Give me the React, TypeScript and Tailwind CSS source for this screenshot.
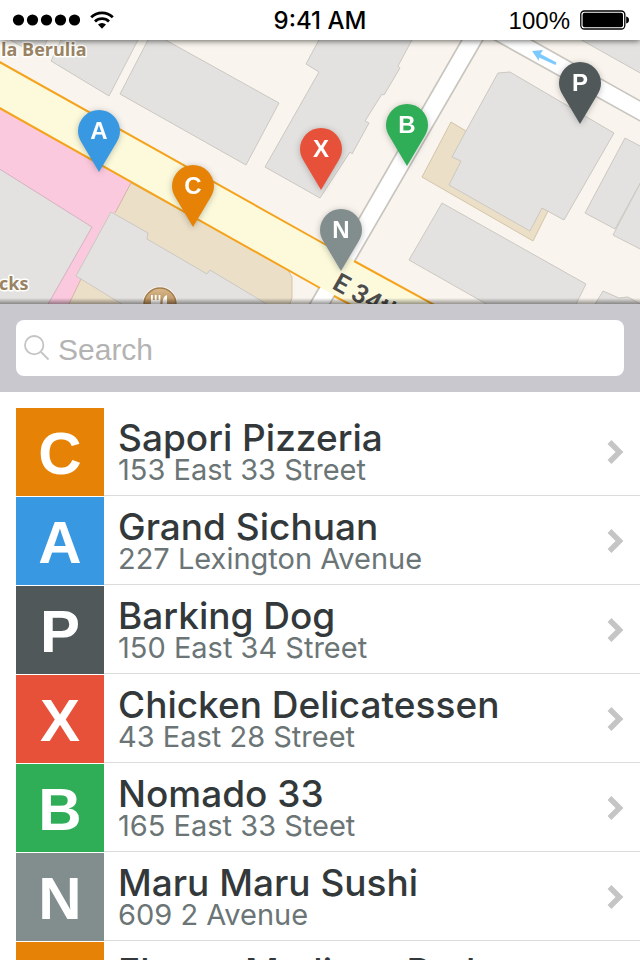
type Place = {
  letter: string;
  name: string;
  address: string;
  tile: string;
};

type Pin = {
  letter: string;
  x: number;
  y: number;
  fill: string;
};

const MAP_W = 640;
const MAP_H = 264;

const places: Place[] = [
  { letter: "C", name: "Sapori Pizzeria", address: "153 East 33 Street", tile: "bg-[#e68306]" },
  { letter: "A", name: "Grand Sichuan", address: "227 Lexington Avenue", tile: "bg-[#3898e2]" },
  { letter: "P", name: "Barking Dog", address: "150 East 34 Street", tile: "bg-[#505859]" },
  { letter: "X", name: "Chicken Delicatessen", address: "43 East 28 Street", tile: "bg-[#e85139]" },
  { letter: "B", name: "Nomado 33", address: "165 East 33 Steet", tile: "bg-[#2fae57]" },
  { letter: "N", name: "Maru Maru Sushi", address: "609 2 Avenue", tile: "bg-[#828d8e]" },
  { letter: "E", name: "Eleven Madison Park", address: "11 Madison Avenue", tile: "bg-[#e68306]" },
];

// x / y is the tip of the pin on the map
const pins: Pin[] = [
  { letter: "A", x: 99, y: 132, fill: "fill-[#3898e2]" },
  { letter: "C", x: 193, y: 187, fill: "fill-[#e68306]" },
  { letter: "X", x: 321, y: 150, fill: "fill-[#e85139]" },
  { letter: "B", x: 407, y: 126, fill: "fill-[#2fae57]" },
  { letter: "P", x: 580, y: 84, fill: "fill-[#505859]" },
  { letter: "N", x: 341, y: 231, fill: "fill-[#828d8e]" },
];

function StatusBar() {
  return (
    <header className="relative z-10 grid h-10 grid-cols-3 items-center bg-white px-3 text-2xl text-black shadow-[0_1px_6px_rgba(0,0,0,0.6)]">
      <div className="flex items-center gap-2">
        <svg width="68" height="12" viewBox="0 0 68 12" aria-label="Signal">
          {[6, 20, 34, 48, 62].map((cx) => (
            <circle key={cx} cx={cx + 0.5} cy="6" r="5.6" />
          ))}
        </svg>
        <svg width="28" height="20" viewBox="0 0 26 20" aria-label="Wi-Fi">
          <g fill="none" stroke="#000" strokeWidth="2.8">
            <path d="M2.2 7.2a15.4 15.4 0 0 1 21.6 0" />
            <path d="M6 11.4a10 10 0 0 1 14 0" />
          </g>
          <path d="M9 14.6a5.8 5.8 0 0 1 8 0l-4 4.2z" />
        </svg>
      </div>
      <div className="pt-0.5 text-center font-['Inter',sans-serif] font-medium">9:41 AM</div>
      <div className="-mr-px flex items-center justify-end gap-2.5">
        <span className="pt-0.5">100%</span>
        <svg width="49" height="20" viewBox="0 0 49 20" aria-label="Battery">
          <rect x="0.8" y="1" width="44" height="18" rx="3.5" fill="none" stroke="#000" strokeWidth="1.3" />
          <rect x="2.6" y="2.8" width="40.4" height="14.4" rx="2" />
          <path d="M46.2 6.5c2 .6 2.8 1.8 2.8 3.5s-.8 2.9-2.8 3.5z" />
        </svg>
      </div>
    </header>
  );
}

function StreetMap() {
  return (
    <svg
      className="h-full w-full"
      viewBox="0 40 640 264"
      preserveAspectRatio="xMidYMid slice"
      aria-hidden="true"
    >
      <rect x="0" y="40" width="640" height="264" fill="#f9f4ed" />

      {/* garden plots */}
      <g fill="#ebdfc8" stroke="#d3c5a8" strokeWidth="1">
        <path d="M131 183 287 269 292 277V298L289 306H60L76 276 111 212z" />
        <path d="M451 122 466 131 470 170 530 225 542 208 548 211 533 241 422 177 431 160z" />
      </g>

      {/* plaza */}
      <path d="M-2 107 131 183 115 213 111 212 76 276 81 279 68 306H40L-2 240z" fill="#fbc9de" />
      <path d="M131 183 115 213M81 279 68 306" stroke="#d6b2a8" strokeWidth="1" />

      {/* blocks */}
      <g fill="#e3e2e0" stroke="#cbc8c2" strokeWidth="1">
        <path d="M7 38 40 57 48 38z" />
        <path d="M62 38 51 61 109 96 139 38z" />
        <path d="M149 38 120 94 246 165 279 103 162 38z" />
        <path d="M320 38 306 64 319 72 265 167 320 198 350 152 352 154 369 123 365 121 382 94 384 95 400 68 398 66 413 38z" />
        <path d="M578 38 642 74V38z" />
        <path d="M466 131 498 73 510 72 614 133 564 220 542 208 530 231 449 185 461 161 452 157z" />
        <path d="M642 147 625 138 585 213 615 229 642 180z" />
        <path d="M642 180 613 235 642 250z" />
        <path d="M442 203 586 284 575 306H490L409 260z" />
        <path d="M594 306 603 291 619 298 628 297 644 306z" />
        <path d="M111 212 148 233 147 239 207 274 210 270 270 306H125L81 279 76 276z" />
        <path d="M-2 168 92 227 47 306H-2z" stroke="#d3b2c0" />
      </g>

      {/* side streets */}
      <g fill="#fff" stroke="#c8c5bf" strokeWidth="1.7">
        <path d="M463 38 308 307 328 307 484 38z" />
        <path d="M491 38 642 122V102L528 38z" />
      </g>

      {/* main avenue */}
      <path d="M-4 60 440 308H357L-4 106z" fill="#fcfadb" />
      <g stroke="#f5a31d" strokeWidth="2" fill="none">
        <path d="M-4 60 328 246M354 261 440 308" />
        <path d="M-4 106 320 288M334 296 357 308" />
      </g>

      <path
        d="M532 51 543 50 540.5 54 556.5 62.5 555.5 65 539 57.5 539 61z"
        fill="#7cc9fd"
      />

      {/* food marker */}
      <defs>
        <linearGradient id="food" x1="0" y1="0" x2="0" y2="1">
          <stop offset="0" stopColor="#d9b98c" />
          <stop offset="0.6" stopColor="#b08652" />
        </linearGradient>
      </defs>
      <circle cx="160" cy="304" r="17.5" fill="#fff" opacity="0.8" />
      <circle cx="160" cy="304" r="16" fill="url(#food)" stroke="#a57c4c" strokeWidth="1.5" />
      <path d="M151 295h1.8v5h2v-5h1.8v5h2v-5h1.8v9l-3 2v4h-3v-4l-3.4-2z" fill="#fff" />
      <path d="M167 295c-3 1-4.5 4-4.5 8v7h4.5z" fill="#fff" />

      <g
        fill="#9a8363"
        stroke="#fff"
        strokeWidth="3"
        strokeLinejoin="round"
        paintOrder="stroke"
        fontFamily="Open Sans, sans-serif"
        fontWeight="700"
        fontSize="18"
      >
        <text x="1" y="56">la Berulia</text>
        <text x="-1" y="290">cks</text>
      </g>
      <text
        transform="translate(331 288) rotate(29)"
        fill="#4c4c4a"
        stroke="#fdfbe6"
        strokeWidth="3"
        strokeLinejoin="round"
        paintOrder="stroke"
        fontFamily="Roboto, sans-serif"
        fontWeight="600"
        fontSize="26"
      >
        E 34th St
      </text>
    </svg>
  );
}

function MapPin({ pin }: { pin: Pin }) {
  return (
    <button
      type="button"
      aria-label={`Place ${pin.letter}`}
      className="absolute h-[62px] w-[42px] -translate-x-1/2 -translate-y-full drop-shadow-[0_1px_3px_rgba(0,0,0,0.25)]"
      style={{ left: `${(pin.x / MAP_W) * 100}%`, top: `${(pin.y / MAP_H) * 100}%` }}
    >
      <svg viewBox="0 0 42 62" className={`absolute inset-0 ${pin.fill}`} aria-hidden="true">
        <path d="M21 62 3.5 32.5C1.3 28.8 0 25.5 0 21a21 21 0 0 1 42 0c0 4.5-1.3 7.8-3.5 11.5z" />
      </svg>
      <span className="relative block pb-5 text-center text-2xl leading-10 font-bold text-white">
        {pin.letter}
      </span>
    </button>
  );
}

function SearchBar() {
  return (
    <form role="search" className="bg-[#c9c8ce] p-4" onSubmit={(e) => e.preventDefault()}>
      <label className="flex h-14 items-center gap-2 rounded-lg bg-white px-2">
        <svg width="26" height="26" viewBox="0 0 26 26" fill="none" stroke="#c4c4c4" strokeWidth="1.8">
          <circle cx="10.2" cy="10.2" r="9.2" />
          <path d="M17 17 24.5 24.5" />
        </svg>
        <input
          type="search"
          aria-label="Search"
          placeholder="Search"
          className="min-w-0 flex-1 bg-transparent pt-1 text-[30px] leading-10 text-[#333] outline-none placeholder:text-[#b3b3b3]"
        />
      </label>
    </form>
  );
}

function PlaceRow({ place }: { place: Place }) {
  return (
    <li>
      <a href={`#${place.letter}`} className="flex h-22">
        <div
          className={`flex w-22 shrink-0 items-center justify-center pt-1 text-[60px] leading-none font-bold text-white ${place.tile}`}
        >
          {place.letter}
        </div>
        <div className="flex min-w-0 flex-1 items-center border-b border-[#dcdcdc] pr-4 pl-3.5">
          <div className="min-w-0 flex-1 pb-1 font-['Inter',sans-serif] whitespace-nowrap">
            <div className="text-[37px] leading-10 font-medium text-[#33393b]">{place.name}</div>
            <div className="text-[29px] leading-6 text-[#6b7576]">{place.address}</div>
          </div>
          <svg width="17" height="24" viewBox="0 0 17 24" fill="none" stroke="#c5c5c5" strokeWidth="5.5">
            <path d="M2.5 2 12.5 12 2.5 22" />
          </svg>
        </div>
      </a>
    </li>
  );
}

export default function App() {
  return (
    <div className="flex h-screen flex-col overflow-hidden bg-white font-['Liberation_Sans',Arial,sans-serif]">
      <StatusBar />
      <section className="relative h-66 shrink-0 overflow-hidden" aria-label="Map">
        <StreetMap />
        {pins.map((pin) => (
          <MapPin key={pin.letter} pin={pin} />
        ))}
        <div className="pointer-events-none absolute inset-x-0 bottom-0 h-1.5 bg-linear-to-t from-black/40 to-transparent" />
      </section>
      <SearchBar />
      <ul className="flex min-h-0 flex-1 flex-col gap-px overflow-hidden pt-4 pl-4">
        {places.map((place) => (
          <PlaceRow key={place.name} place={place} />
        ))}
      </ul>
    </div>
  );
}
